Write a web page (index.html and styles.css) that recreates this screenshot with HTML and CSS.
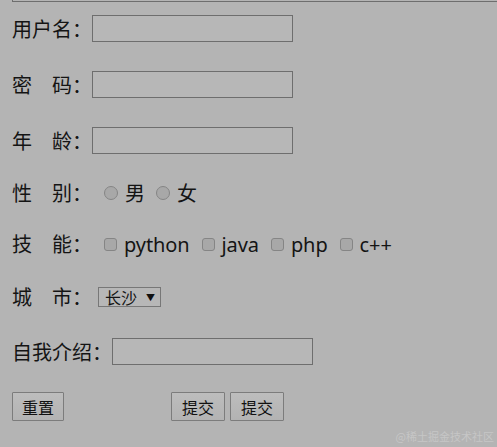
FILE: index.html
```html
<!DOCTYPE html>
<html lang="zh-CN">
<head>
<meta charset="utf-8">
<title>表单</title>
<link rel="stylesheet" href="styles.css">
</head>
<body>
<div class="topline"></div>
<form class="form">
  <div class="row row-input">
    <span class="label">用户名：</span>
    <input class="text" type="text">
  </div>
  <div class="row row-input">
    <span class="label">密　码：</span>
    <input class="text" type="password">
  </div>
  <div class="row row-input">
    <span class="label">年　龄：</span>
    <input class="text" type="text">
  </div>
  <div class="row row-radio">
    <span class="label">性　别：</span>
    <label class="opt opt-radio"><input type="radio" name="sex"><span>男</span></label>
    <label class="opt opt-radio"><input type="radio" name="sex"><span>女</span></label>
  </div>
  <div class="row row-check">
    <span class="label">技　能：</span>
    <label class="opt opt-check"><input type="checkbox"><span>python</span></label>
    <label class="opt opt-check"><input type="checkbox"><span>java</span></label>
    <label class="opt opt-check"><input type="checkbox"><span>php</span></label>
    <label class="opt opt-check"><input type="checkbox"><span>c++</span></label>
  </div>
  <div class="row row-select">
    <span class="label">城　市：</span>
    <span class="select"><span class="select-text">长沙</span><span class="select-arrow">▼</span></span>
  </div>
  <div class="row row-input">
    <span class="label">自我介绍：</span>
    <input class="text" type="text">
  </div>
  <div class="row row-buttons">
    <button class="btn" type="reset">重置</button>
    <button class="btn btn-submit" type="submit">提交</button>
    <button class="btn" type="submit">提交</button>
  </div>
</form>
<div class="watermark">@稀土掘金技术社区</div>
</body>
</html>
```

FILE: styles.css
```css
html, body {
  margin: 0;
  padding: 0;
  height: 100%;
  overflow: hidden;
}
body {
  background: #b4b4b4;
  color: #141414;
  font-family: "Noto Sans", "Noto Sans CJK SC", sans-serif;
  position: relative;
}
.topline {
  margin-left: 12px;
  height: 1px;
  border-left: 1px solid #6e6e6e;
  border-bottom: 1px solid #6e6e6e;
}
.form {
  display: flex;
  flex-direction: column;
  gap: 29px;
  padding: 13px 0 0 12px;
  margin: 0;
}
.row {
  display: flex;
  align-items: center;
  font-size: 20px;
  line-height: 1;
}
.row-input { height: 27px; }
.row-radio { height: 20px; }
.row-check { height: 24px; }
.row-select { height: 24px; }
.row-buttons { height: 29px; margin-top: -2px; }
.label {
  white-space: pre;
  font-family: "Noto Sans CJK SC", sans-serif;
}
.text {
  box-sizing: border-box;
  width: 201px;
  height: 27px;
  margin: 0;
  padding: 0 4px;
  border: 1px solid #6e6e6e;
  background: #b7b7b7;
  outline: none;
}
.opt {
  display: flex;
  align-items: center;
}
.opt input {
  appearance: none;
  -webkit-appearance: none;
  margin: 0;
  background: #a8a8a8;
  border: 1px solid #858585;
  box-sizing: border-box;
}
.opt-radio input {
  width: 14px;
  height: 14px;
  border-radius: 50%;
  margin-right: 7px;
}
.opt-radio:first-of-type { margin-left: 12px; }
.opt-radio + .opt-radio { margin-left: 11px; }
.opt-radio span { font-family: "Noto Sans CJK SC", sans-serif; }
.opt-check input {
  width: 13px;
  height: 13px;
  border-radius: 3px;
  margin-right: 7px;
}
.opt-check:first-of-type { margin-left: 12px; }
.opt-check + .opt-check { margin-left: 12px; }
.opt-check span { position: relative; top: 1px; letter-spacing: -0.1px; }
.select {
  box-sizing: border-box;
  display: flex;
  align-items: center;
  height: 20px;
  width: 63px;
  margin-left: 6px;
  padding: 0 0 0 6px;
  border: 1px solid #777;
  background: #b7b7b7;
  font-size: 16px;
  font-family: "Noto Sans CJK SC", sans-serif;
}
.select-text { width: 41px; }
.select-arrow { font-size: 9px; color: #111; }
.btn {
  box-sizing: border-box;
  height: 29px;
  width: 52px;
  margin: 0;
  padding: 0;
  border: 1px solid #7c7c7c;
  border-radius: 1px;
  background: linear-gradient(#bdbdbd, #b3b3b3);
  color: #111;
  font-size: 16px;
  font-family: "Noto Sans CJK SC", sans-serif;
}
.btn + .btn { width: 54px; margin-left: 5px; }
.btn-submit { margin-left: 107px !important; }
.watermark {
  position: absolute;
  right: 3px;
  bottom: 4px;
  font-size: 11px;
  line-height: 13px;
  color: #c6c6c6;
  font-family: "Noto Sans CJK SC", sans-serif;
}
```
